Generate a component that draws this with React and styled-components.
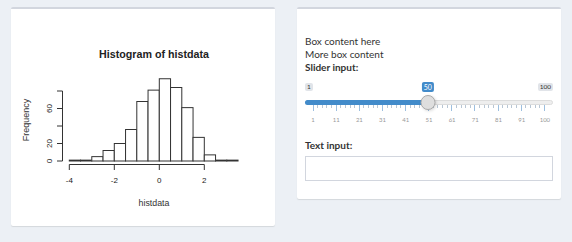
import React from "react";
import styled, { createGlobalStyle } from "styled-components";

const GlobalStyle = createGlobalStyle`
  body {
    margin: 0;
    background: #ecf0f5;
    font-family: "Lato", "Liberation Sans", sans-serif;
    color: #333;
  }
`;

// histogram counts, breaks from -4 to 3.5 by 0.5
const COUNTS = [1, 1, 5, 12, 20, 36, 68, 81, 94, 84, 61, 27, 7, 1, 1];
const X0 = 69.3; // x of -4
const STEP = 11.25; // px per 0.5
const BASE = 161; // y of 0
const PPU = 0.875; // px per count

const xOf = (v) => X0 + (v + 4) * STEP * 2;
const yOf = (c) => BASE - c * PPU;

const Histogram = () => (
  <svg width="264" height="217" viewBox="11 9 264 217">
    <g fontFamily="'Liberation Sans', Arial, sans-serif" fill="#222">
      <text x="154" y="58" fontSize="10.7" fontWeight="bold" textAnchor="middle">
        Histogram of histdata
      </text>
      <text x="154" y="206" fontSize="8.8" textAnchor="middle" fill="#333">
        histdata
      </text>
      <text
        x="0"
        y="0"
        fontSize="9"
        textAnchor="middle"
        fill="#333"
        transform="translate(28.5 120) rotate(-90)"
      >
        Frequency
      </text>
    </g>
    <g stroke="#333" strokeWidth="1" fill="#fff">
      {COUNTS.map((c, i) => (
        <rect
          key={i}
          x={X0 + i * STEP}
          y={yOf(c)}
          width={STEP}
          height={c * PPU}
        />
      ))}
    </g>
    <g stroke="#333" strokeWidth="1" fill="none">
      <line x1="62.5" y1={yOf(0)} x2="62.5" y2={yOf(80)} />
      {[0, 20, 40, 60, 80].map((v) => (
        <line key={v} x1="57" y1={yOf(v)} x2="62.5" y2={yOf(v)} />
      ))}
      <line x1={xOf(-4)} y1="164.5" x2={xOf(2)} y2="164.5" />
      {[-4, -2, 0, 2].map((v) => (
        <line key={v} x1={xOf(v)} y1="164.5" x2={xOf(v)} y2="170" />
      ))}
    </g>
    <g fontFamily="'Liberation Sans', Arial, sans-serif" fontSize="8" fill="#222">
      {[-4, -2, 0, 2].map((v) => (
        <text key={v} x={xOf(v)} y="182.7" textAnchor="middle">
          {v}
        </text>
      ))}
      {[0, 20, 60].map((v) => (
        <text
          key={v}
          x="0"
          y="0"
          textAnchor="middle"
          transform={`translate(51.5 ${yOf(v)}) rotate(-90)`}
        >
          {v}
        </text>
      ))}
    </g>
  </svg>
);

const TICKS = Array.from({ length: 51 }, (_, i) => i);
const GRID_LABELS = [1, 11, 21, 31, 41, 51, 61, 71, 81, 91, 100];

const SliderInput = ({ min, max, value }) => {
  const pos = `calc(8px + (100% - 16px) * ${(value - min) / (max - min)})`;
  return (
    <Slider>
      <EdgeRow>
        <EdgeLabel>{min}</EdgeLabel>
        <EdgeLabel>{max}</EdgeLabel>
        <ValueLabel style={{ left: pos }}>{value}</ValueLabel>
      </EdgeRow>
      <Track>
        <Bar style={{ width: pos }} />
        <Handle style={{ left: pos }} />
      </Track>
      <Grid>
        <TickRow>
          {TICKS.map((t) => (
            <Tick key={t} $major={t % 5 === 0} />
          ))}
        </TickRow>
        <GridLabels>
          {GRID_LABELS.map((l) => (
            <GridLabel key={l}>{l}</GridLabel>
          ))}
        </GridLabels>
      </Grid>
    </Slider>
  );
};

const App = () => (
  <>
    <GlobalStyle />
    <Page>
      <Box $height={219}>
        <Histogram />
      </Box>
      <Box $height={192}>
        <BoxBody>
          <Line>Box content here</Line>
          <Line>More box content</Line>
          <Label>Slider input:</Label>
          <SliderInput min={1} max={100} value={50} />
          <Label>Text input:</Label>
          <TextField type="text" />
        </BoxBody>
      </Box>
    </Page>
  </>
);
export default App;

const Page = styled.div`
  display: flex;
  align-items: flex-start;
  gap: 22px;
  padding: 7px 11px;
`;
const Box = styled.div`
  box-sizing: border-box;
  width: 264px;
  height: ${(p) => p.$height}px;
  background: #fff;
  border-top: 2px solid #d2d6de;
  border-radius: 2px;
  box-shadow: 0 1px 1px rgba(0, 0, 0, 0.1);
  svg {
    display: block;
  }
`;
const BoxBody = styled.div`
  display: flex;
  flex-direction: column;
  padding: 26px 8px 0;
  font-size: 10px;
  line-height: 13px;
`;
const Line = styled.div``;
const Label = styled.div`
  font-weight: 700;
`;
const Slider = styled.div`
  display: flex;
  flex-direction: column;
  padding-top: 8.5px;
  margin-bottom: 16px;
`;
const EdgeRow = styled.div`
  position: relative;
  display: flex;
  justify-content: space-between;
  height: 9px;
`;
const EdgeLabel = styled.span`
  height: 8.5px;
  padding: 0 2px;
  background: #e1e4e9;
  border-radius: 2px;
  font-size: 6.5px;
  line-height: 8.5px;
  color: #333;
`;
const ValueLabel = styled.span`
  position: absolute;
  top: -0.5px;
  transform: translateX(-50%);
  height: 10px;
  padding: 0 2px;
  background: #428bca;
  border-radius: 2px;
  font-size: 7px;
  line-height: 10px;
  color: #fff;
`;
const Track = styled.div`
  position: relative;
  margin-top: 8.5px;
  height: 5px;
  box-sizing: border-box;
  background: #eee;
  border: 1px solid #dcdcdc;
  border-radius: 3px;
`;
const Bar = styled.div`
  position: absolute;
  top: -1px;
  left: -1px;
  height: 5px;
  background: #428bca;
  border-radius: 3px 0 0 3px;
`;
const Handle = styled.div`
  position: absolute;
  top: -6px;
  width: 15px;
  height: 15px;
  box-sizing: border-box;
  transform: translateX(-50%);
  border-radius: 50%;
  background: #dedede;
  border: 1px solid #ababab;
  box-shadow: 1px 1px 3px rgba(0, 0, 0, 0.15);
`;
const Grid = styled.div`
  display: flex;
  flex-direction: column;
  gap: 4.5px;
  padding: 0 8px;
`;
const TickRow = styled.div`
  display: flex;
  justify-content: space-between;
  align-items: flex-start;
  height: 6px;
  margin: 0 -0.5px;
`;
const Tick = styled.span`
  width: 1px;
  height: ${(p) => (p.$major ? 6 : 3)}px;
  background: ${(p) => (p.$major ? "#9dbfdf" : "#b8c6d4")};
`;
const GridLabels = styled.div`
  display: flex;
  justify-content: space-between;
`;
const GridLabel = styled.span`
  display: flex;
  justify-content: center;
  width: 0;
  font-size: 6px;
  line-height: 7px;
  color: #999;
  white-space: nowrap;
`;
const TextField = styled.input`
  box-sizing: border-box;
  margin: 4.7px 0 0;
  width: 100%;
  height: 25px;
  border: 1px solid #d2d6de;
  outline: none;
  padding: 0 6px;
  font-family: inherit;
`;
